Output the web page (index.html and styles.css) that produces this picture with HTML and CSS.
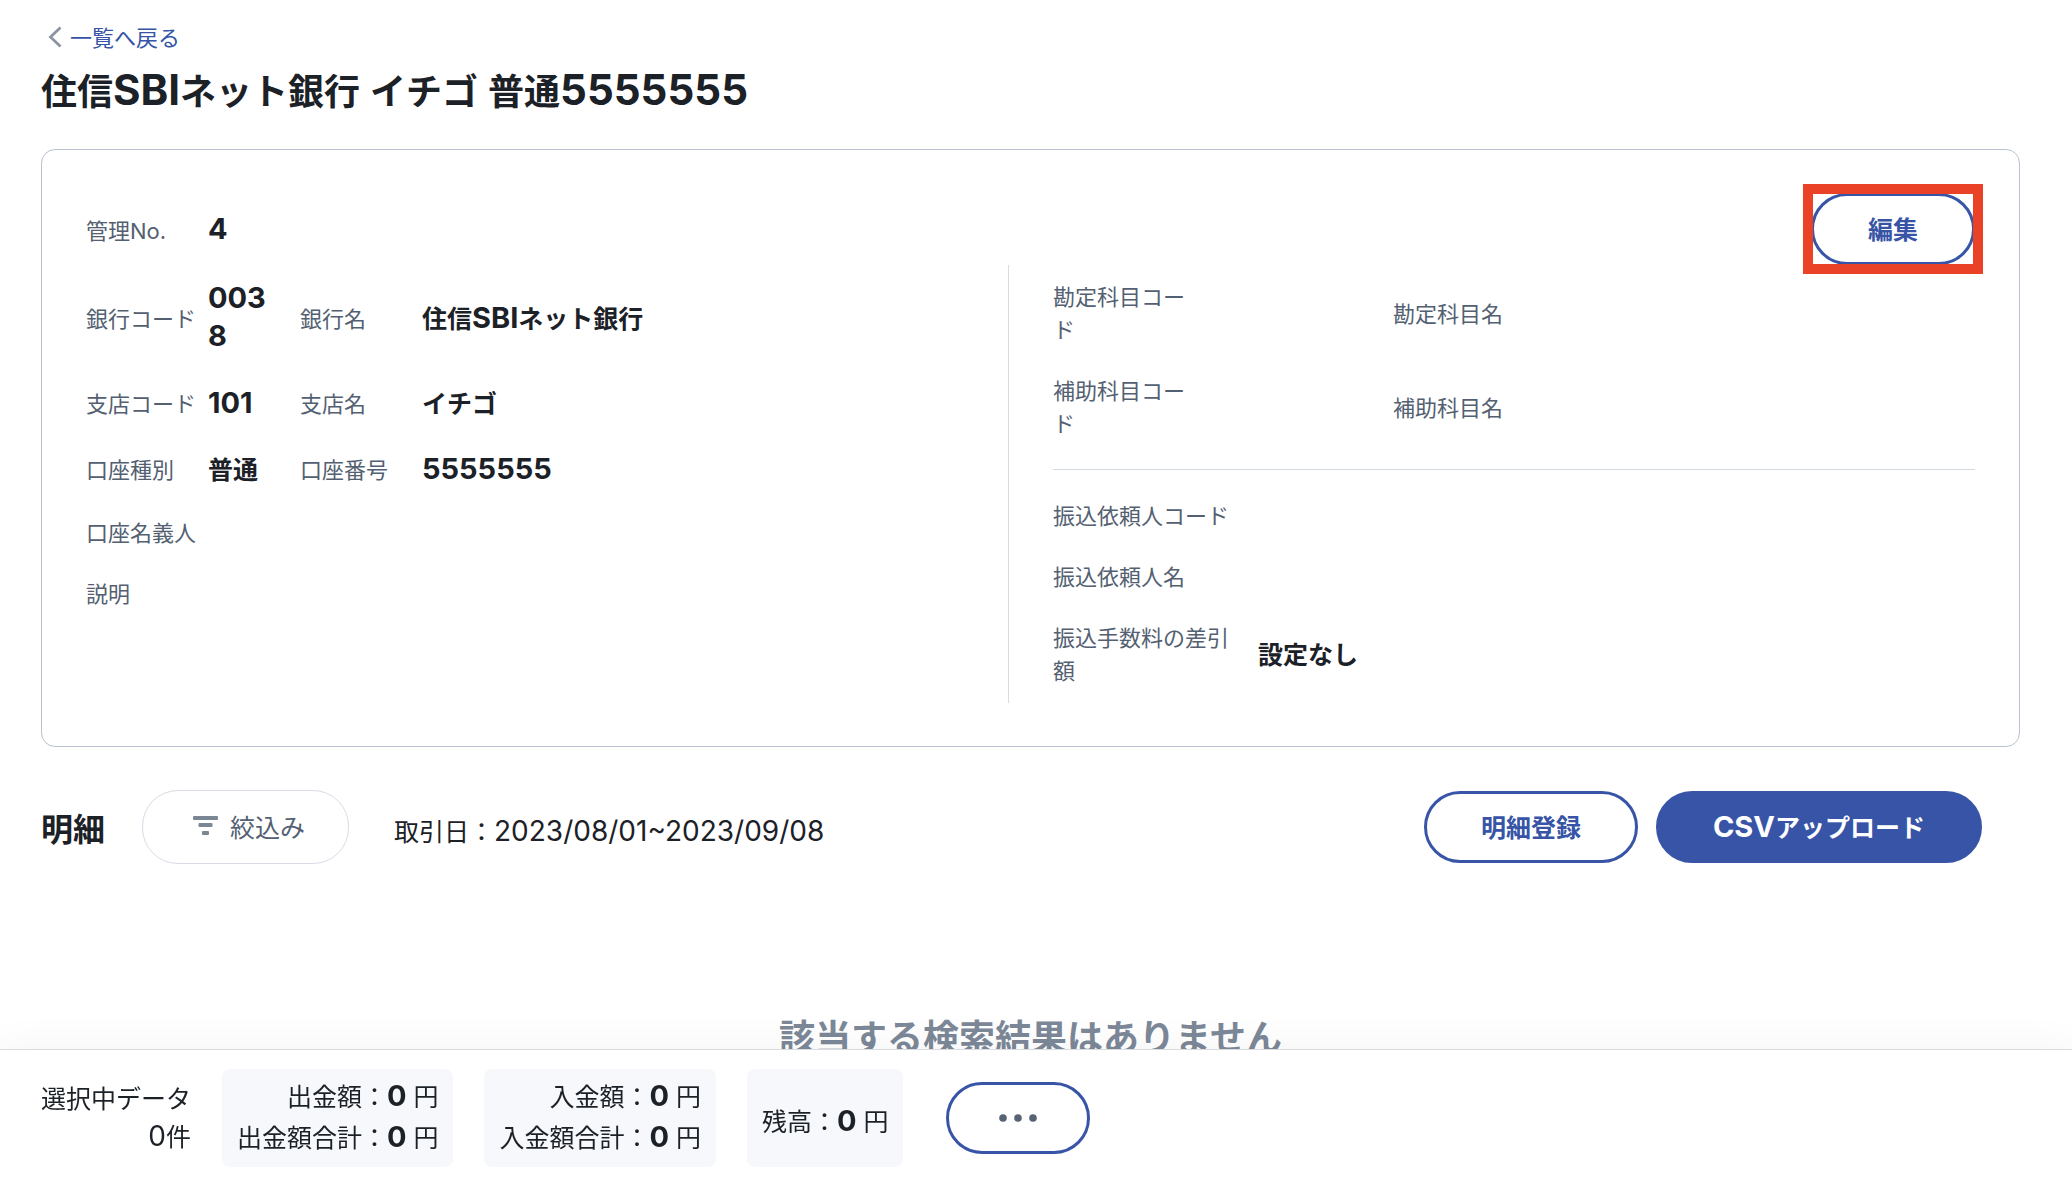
FILE: index.html
```html
<!DOCTYPE html>
<html lang="ja">
<head>
<meta charset="utf-8">
<meta name="viewport" content="width=device-width, initial-scale=1">
<title>住信SBIネット銀行 イチゴ 普通5555555</title>
<link rel="stylesheet" href="styles.css">
</head>
<body>
<main class="page">
  <nav class="back">
    <svg class="back-icon" width="14" height="22" viewBox="0 0 14 22" fill="none" stroke="currentColor" stroke-width="2.8" aria-hidden="true"><path d="M12.500 1.500 2.500 11l10 9.500"/></svg>
    <a class="back-link" href="#">一覧へ戻る</a>
  </nav>
  <h1 class="title">住信<span class="latin">SBI</span>ネット銀行<span class="latin"> </span>イチゴ<span class="latin"> </span>普通<span class="latin">5555555</span></h1>

  <section class="card">
    <div class="card-head">
      <dl class="row">
        <dt>管理<span class="latin">No.</span></dt><dd class="latin">4</dd>
      </dl>
      <div class="highlight">
        <button class="btn btn-outline" type="button">編集</button>
      </div>
    </div>
    <div class="card-body">
      <div class="col">
        <dl class="row">
          <dt>銀行コード</dt><dd class="code latin">0038</dd>
          <dt>銀行名</dt><dd>住信<span class="latin">SBI</span>ネット銀行</dd>
        </dl>
        <dl class="row">
          <dt>支店コード</dt><dd><span class="latin">101</span></dd>
          <dt>支店名</dt><dd>イチゴ</dd>
        </dl>
        <dl class="row">
          <dt>口座種別</dt><dd>普通</dd>
          <dt>口座番号</dt><dd><span class="latin">5555555</span></dd>
        </dl>
        <dl class="row"><dt>口座名義人</dt><dd></dd></dl>
        <dl class="row"><dt>説明</dt><dd></dd></dl>
      </div>
      <div class="col col-right">
        <dl class="row row-account"><dt>勘定科目コード</dt><dd></dd><dt>勘定科目名</dt><dd></dd></dl>
        <dl class="row row-account"><dt>補助科目コード</dt><dd></dd><dt>補助科目名</dt><dd></dd></dl>
        <hr class="rule">
        <dl class="row row-transfer"><dt>振込依頼人コード</dt><dd></dd></dl>
        <dl class="row row-transfer"><dt>振込依頼人名</dt><dd></dd></dl>
        <dl class="row row-transfer"><dt>振込手数料の差引額</dt><dd>設定なし</dd></dl>
      </div>
    </div>
  </section>

  <section class="details">
    <div class="toolbar">
      <h2 class="subtitle">明細</h2>
      <button class="filter" type="button">
        <svg width="26" height="20" viewBox="0 0 26 20" fill="#7b8795" aria-hidden="true"><rect x="0" y="0" width="25" height="4" rx="1"/><rect x="5.500" y="7" width="14" height="4" rx="1"/><rect x="9" y="15" width="7" height="4" rx="1"/></svg>
        絞込み
      </button>
      <p class="period">取引日：<span class="latin">2023/08/01~2023/09/08</span></p>
      <div class="actions">
        <button class="btn btn-outline" type="button">明細登録</button>
        <button class="btn btn-solid" type="button"><span class="latin">CSV</span>アップロード</button>
      </div>
    </div>
    <p class="empty">該当する検索結果はありません</p>
  </section>
</main>

<footer class="summary">
  <p class="selected">選択中データ<br><span class="latin">0</span>件</p>
  <div class="totals">
    <p>出金額：<b class="latin">0 </b>円</p>
    <p>出金額合計：<b class="latin">0 </b>円</p>
  </div>
  <div class="totals">
    <p>入金額：<b class="latin">0 </b>円</p>
    <p>入金額合計：<b class="latin">0 </b>円</p>
  </div>
  <div class="totals totals-single">
    <p>残高：<b class="latin">0 </b>円</p>
  </div>
  <button class="btn btn-outline btn-more" type="button" aria-label="その他の操作">
    <svg width="38" height="8" viewBox="0 0 38 8" fill="#566373" aria-hidden="true"><circle cx="4" cy="4" r="3.800"/><circle cx="19" cy="4" r="3.800"/><circle cx="34" cy="4" r="3.800"/></svg>
  </button>
</footer>
</body>
</html>
```

FILE: styles.css
```css
:root {
  --ink: #1b2127;
  --label: #536071;
  --blue: #3754a7;
  --line: #b9c2ce;
  --cjk: "Noto Sans CJK JP", sans-serif;
  --latin: Inter, "Noto Sans CJK JP", sans-serif;
}

* { box-sizing: border-box; }

body {
  margin: 0;
  background: #fff;
  color: var(--ink);
  font: 25px/38px var(--cjk);
}

h1, h2, p, dl, dd { margin: 0; }

.latin {
  font-family: var(--latin);
  font-size: 28px;
  line-height: 1;
}

.page { padding: 20px 52px 104px 41px; }

.back {
  display: flex;
  align-items: center;
  gap: 8px;
  padding-left: 7px;
  color: #8b95a2;
  font-size: 22px;
  line-height: 33px;
}

.back-link {
  color: var(--blue);
  text-decoration: none;
}

.title {
  margin-top: 9px;
  font-size: 36px;
  line-height: 54px;
}

.title .latin { font-size: 42px; }

.card {
  margin-top: 33px;
  padding: 43px 44px;
  border: 1px solid var(--line);
  border-radius: 14px;
}

.card-head {
  display: flex;
  justify-content: space-between;
  align-items: center;
}

.card-body { display: flex; }

.col {
  flex: 1 1 0;
  box-sizing: content-box;
}

.col-right {
  padding: 0 0 3px 44px;
  border-left: 1px solid #d6dbe1;
}

.row {
  display: grid;
  grid-template-columns: 122px 92px 122px 1fr;
  align-items: center;
  padding: 14px 0;
}

.row-account { grid-template-columns: 150px 190px 150px 1fr; }
.row-transfer { grid-template-columns: 205px 1fr; }

dt {
  color: var(--label);
  font-size: 22px;
  line-height: 33px;
}

.row dt .latin { font-size: 22px; }
.row-transfer dt { padding-right: 14px; }

dd { font-weight: 700; }

dd.latin,
dd .latin,
.btn .latin,
.totals .latin {
  font-size: 29px;
}

dd.latin { line-height: 38px; }

.code {
  padding-right: 28px;
  word-break: break-all;
}

.rule {
  margin: 16px 0 14px;
  border: 0;
  border-top: 1px solid #d3dae2;
}

.btn {
  height: 72px;
  padding: 0 54px 2px;
  border: 3px solid var(--blue);
  border-radius: 36px;
  font: 700 25px/38px var(--cjk);
}

.btn-outline {
  background: #fff;
  color: var(--blue);
}

.btn-solid {
  background: var(--blue);
  color: #fff;
}

.highlight {
  position: relative;
  display: flex;
}

.highlight::after {
  content: "";
  position: absolute;
  inset: -9px -8px;
  border: 10px solid #ea4226;
  pointer-events: none;
}

.toolbar {
  display: flex;
  align-items: center;
  margin-top: 43px;
  padding-right: 38px;
}

.subtitle {
  font-size: 32px;
  line-height: 48px;
}

.filter {
  display: flex;
  align-items: center;
  gap: 11px;
  height: 74px;
  margin-left: 37px;
  padding: 0 43px 2px 50px;
  border: 1px solid #d9dce6;
  border-radius: 36px;
  background: #fff;
  color: var(--label);
  font: 25px/38px var(--cjk);
}

.period {
  margin-left: 45px;
  padding-top: 6px;
}

.actions {
  display: flex;
  gap: 18px;
  margin-left: auto;
}

.empty {
  margin-top: 144px;
  color: #7c8898;
  font-size: 36px;
  font-weight: 700;
  line-height: 54px;
  text-align: center;
}

.summary {
  position: fixed;
  right: 0;
  bottom: 0;
  left: 0;
  display: flex;
  align-items: center;
  gap: 31px;
  padding: 19px 41px 11px;
  border-top: 1px solid #d9dbde;
  background: #fff;
  box-shadow: 0 0 40px rgba(0, 0, 0, 0.05);
}

.selected {
  padding-bottom: 4px;
  text-align: right;
}

.totals {
  display: flex;
  flex-direction: column;
  justify-content: center;
  align-self: stretch;
  padding: 6px 15px 10px;
  border-radius: 8px;
  background: #f6f8fc;
  line-height: 41px;
  text-align: right;
}

.totals-single { padding: 10px 15px 6px; }

.btn-more {
  display: flex;
  align-items: center;
  justify-content: center;
  width: 144px;
  margin-left: 12px;
  padding: 0;
}
```
